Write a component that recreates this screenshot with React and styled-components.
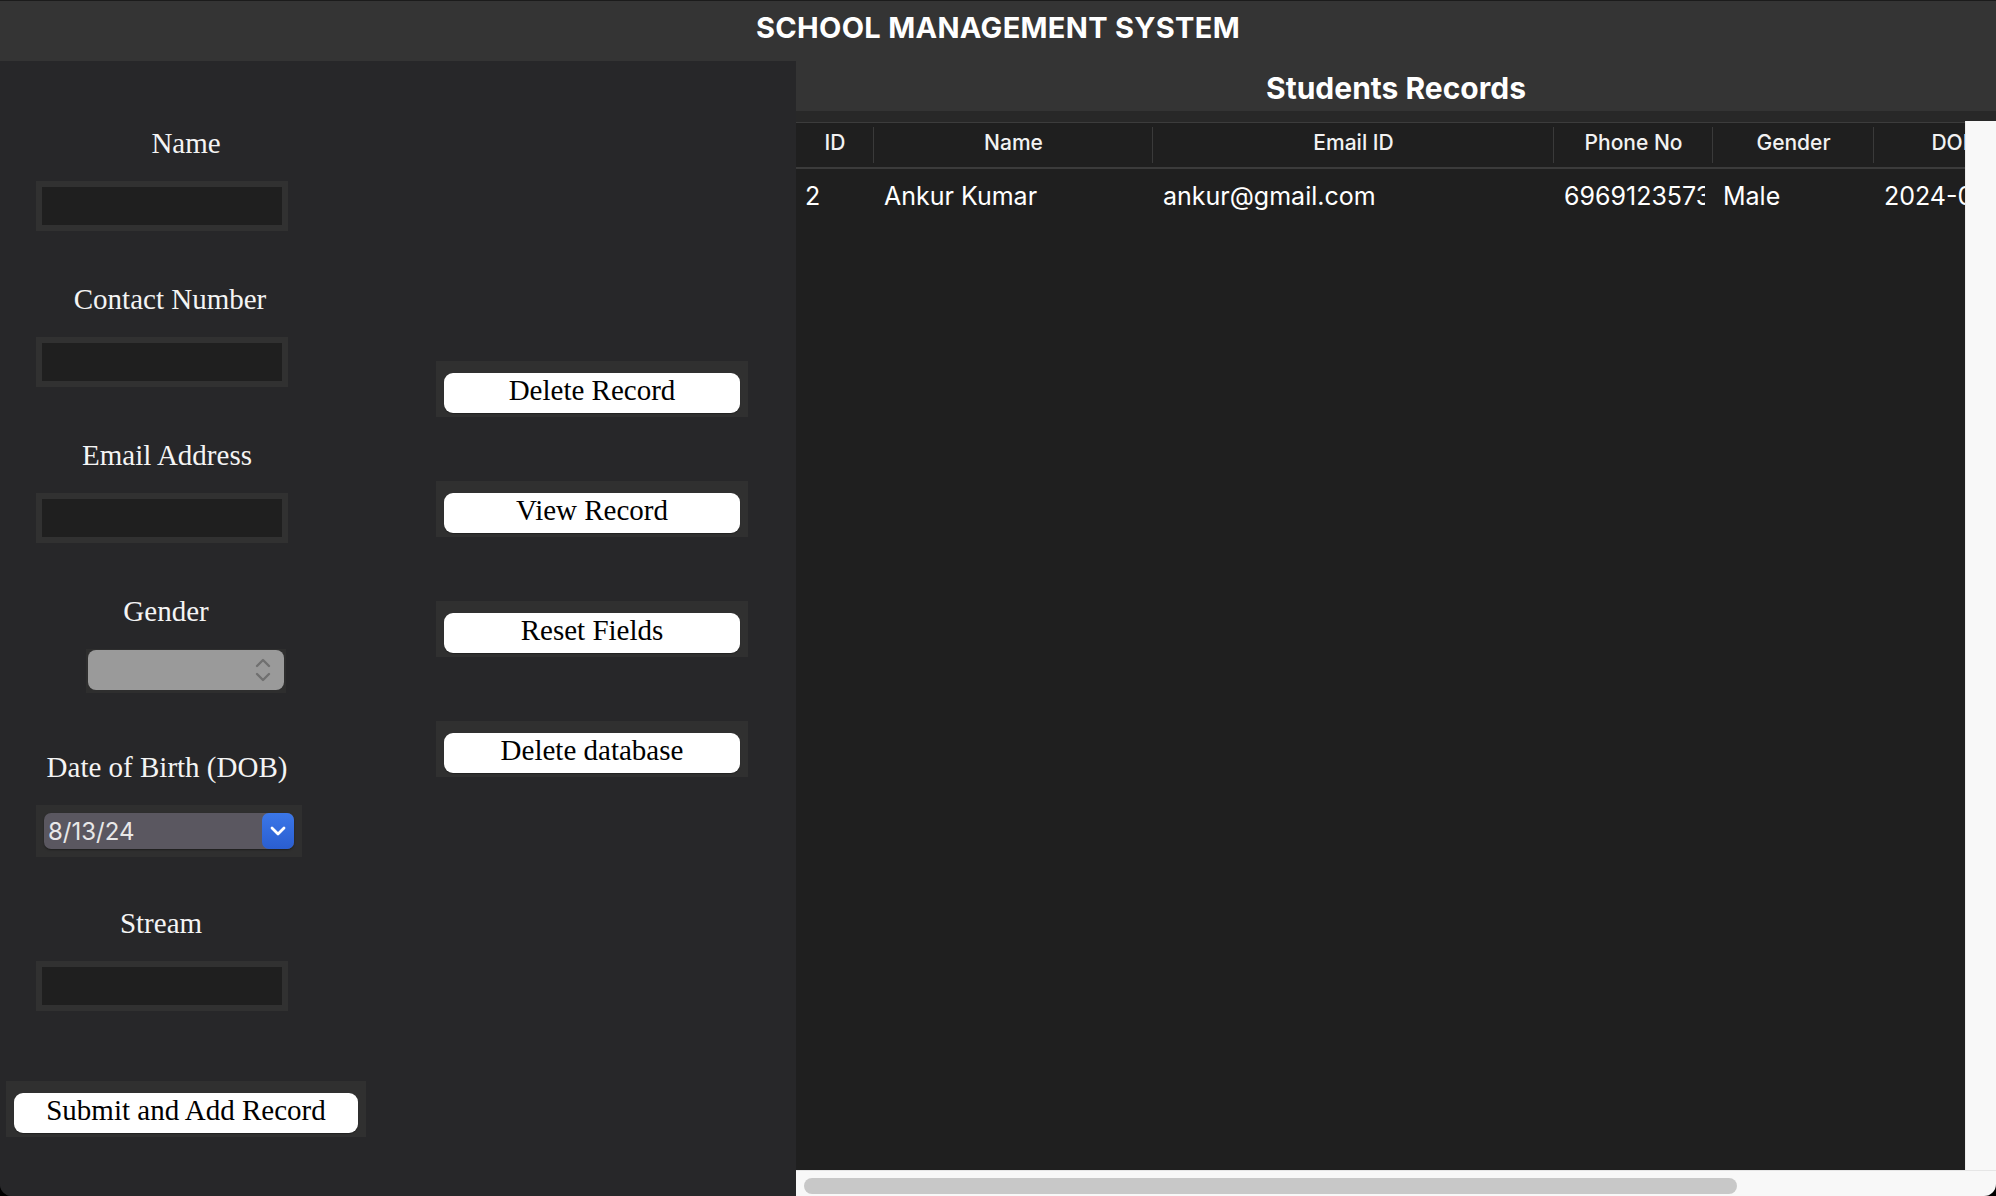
import React from 'react'
import styled, { createGlobalStyle } from 'styled-components'

/* School management window: form on the left, records table on the right */

const SERIF = "'Liberation Serif', 'DejaVu Serif', serif";
const SANS = "Inter, 'Liberation Sans', sans-serif";

const GlobalStyle = createGlobalStyle`
  html, body {
    margin: 0;
    padding: 0;
    background: #000;
  }
  body {
    width: 1996px;
    height: 1196px;
    overflow: hidden;
  }
`

const Window = styled.div`
  width: 1996px;
  height: 1196px;
  box-sizing: border-box;
  display: grid;
  grid-template-columns: 796px 1fr;
  grid-template-rows: 60px 1fr;
  background: #272729;
  border-top: 1px solid #1b1b1b;
  border-radius: 0 0 12px 12px;
  overflow: hidden;
`
const TitleBar = styled.header`
  grid-column: 1 / -1;
  background: #343434;
  display: flex;
  align-items: center;
  justify-content: center;
  padding-bottom: 7px;
  font-family: ${SANS};
  font-weight: 700;
  font-size: 29px;
  letter-spacing: 0.3px;
  color: #fff;
`

/* Left side */
const LeftPanel = styled.section`
  display: grid;
  grid-template-columns: 400px 1fr;
  background: #272729;
`
const FormColumn = styled.div`
  display: flex;
  flex-direction: column;
  align-items: flex-start;
  padding: 63px 0 0 36px;
`
const Field = styled.div`
  height: 156px;
  display: flex;
  flex-direction: column;
  align-items: flex-start;
`
const Label = styled.div`
  width: 252px;
  height: 40px;
  line-height: 38px;
  margin-bottom: 17px;
  text-align: center;
  white-space: nowrap;
  transform: translateX(${p => p.$dx || 0}px);
  font-family: ${SERIF};
  font-size: 29px;
  color: #f4f4f4;
`
const Entry = styled.input`
  width: 252px;
  height: 50px;
  box-sizing: border-box;
  margin: 0;
  padding: 0 6px;
  border: 6px solid #313131;
  background: #1f1f1f;
  color: #fff;
  font-family: ${SANS};
  font-size: 20px;
  outline: none;
`
const SelectFrame = styled.div`
  margin-left: 50px;
  width: 200px;
  height: 44px;
  box-sizing: border-box;
  padding: 1px 2px 3px;
  background: #2e2e2e;
`
const SelectBox = styled.div`
  height: 100%;
  border-radius: 8px;
  background: #9a9a9a;
  display: flex;
  align-items: center;
  justify-content: flex-end;
  padding-right: 13px;
`
const DateFrame = styled.div`
  width: 266px;
  height: 52px;
  box-sizing: border-box;
  padding: 8px;
  background: #2f2f2f;
`
const DateBox = styled.div`
  height: 100%;
  border-radius: 7px;
  background: #5a5760;
  display: flex;
  align-items: center;
  justify-content: space-between;
  box-shadow: 0 1px 2px rgba(0, 0, 0, 0.4);
`
const DateText = styled.span`
  padding-left: 4px;
  font-family: ${SANS};
  font-size: 24px;
  color: #e8e8e8;
`
const DateButton = styled.div`
  width: 32px;
  height: 100%;
  border-radius: 7px;
  background: linear-gradient(#3b77e8, #2a5ed0);
  display: flex;
  align-items: center;
  justify-content: center;
`
const ButtonFrame = styled.div`
  width: ${p => p.$w}px;
  box-sizing: border-box;
  padding: 12px 8px 4px;
  margin-left: ${p => p.$ml || 0}px;
  background: #303030;
`
const WhiteButton = styled.button`
  display: block;
  width: 100%;
  height: 40px;
  box-sizing: border-box;
  margin: 0;
  padding: 0 0 6px;
  border: none;
  border-radius: 9px;
  background: #fff;
  box-shadow: 0 1px 1px rgba(0, 0, 0, 0.35);
  font-family: ${SERIF};
  font-size: 29px;
  line-height: 34px;
  color: #000;
`
const SubmitWrap = styled.div`
  margin-top: 21px;
`
const ActionColumn = styled.div`
  display: flex;
  flex-direction: column;
  gap: 64px;
  padding: 300px 0 0 36px;
`

/* Right side */
const RightPanel = styled.section`
  display: flex;
  flex-direction: column;
  min-width: 0;
  background: #282828;
`
const PanelTitle = styled.h2`
  margin: 0 0 11px;
  height: 50px;
  flex: none;
  background: #343434;
  display: flex;
  align-items: center;
  justify-content: center;
  padding-top: 3px;
  box-sizing: border-box;
  font-family: ${SANS};
  font-weight: 700;
  font-size: 30px;
  color: #fff;
`
const TableArea = styled.div`
  flex: 1;
  display: flex;
  min-height: 0;
`
const Viewport = styled.div`
  flex: 1;
  overflow: hidden;
  background: #1f1f1f;
  border-top: 1px solid #3c3c3c;
`
const VScroll = styled.div`
  width: 30px;
  margin-top: -1px;
  background: #f8f8f8;
  border-left: 1px solid #ececec;
`
const HScroll = styled.div`
  height: 26px;
  flex: none;
  box-sizing: border-box;
  padding: 7px 0 2px 8px;
  background: #f8f8f8;
  border-top: 1px solid #e6e6e6;
`
const Thumb = styled.div`
  width: 933px;
  height: 16px;
  border-radius: 8px;
  background: #c8c8c8;
`
const Table = styled.table`
  table-layout: fixed;
  width: 1238px;
  border-collapse: collapse;
  font-family: ${SANS};
`
const HeadCell = styled.th`
  position: relative;
  height: 38px;
  padding: 0 0 6px;
  border-bottom: 2px solid #3b3b3b;
  font-size: 21px;
  font-weight: 500;
  color: #f2f2f2;
  text-align: center;
  &::after {
    content: '';
    position: absolute;
    right: 0;
    top: 4px;
    bottom: 4px;
    width: 1px;
    background: #3a3a3a;
  }
  &:last-child::after {
    display: none;
  }
`
const Cell = styled.td`
  height: 54px;
  padding: 0 8px 2px ${p => p.$pl ?? 10}px;
  font-size: 25px;
  color: #fff;
`
const CellText = styled.span`
  display: block;
  overflow: hidden;
  white-space: nowrap;
`

const columns = [
  { title: 'ID', width: 78 },
  { title: 'Name', width: 279 },
  { title: 'Email ID', width: 401 },
  { title: 'Phone No', width: 159 },
  { title: 'Gender', width: 161 },
  { title: 'DOB', width: 160 },
];

const rows = [
  ['2', 'Ankur Kumar', 'ankur@gmail.com', '6969123573', 'Male', '2024-08-13'],
];

const fields = [
  { label: 'Name', dx: 24 },
  { label: 'Contact Number', dx: 8 },
  { label: 'Email Address', dx: 5 },
  { label: 'Gender', dx: 4, kind: 'select' },
  { label: 'Date of Birth (DOB)', dx: 5, kind: 'date' },
  { label: 'Stream', dx: -1 },
];

const actions = ['Delete Record', 'View Record', 'Reset Fields', 'Delete database'];

const UpDown = () => (
  <svg width="16" height="26" viewBox="0 0 16 26" fill="none" stroke="#707070" strokeWidth="2.4" strokeLinecap="round" strokeLinejoin="round">
    <path d="M2 9 L8 3 L14 9" />
    <path d="M2 17 L8 23 L14 17" />
  </svg>
);

const ChevronDown = () => (
  <svg width="16" height="10" viewBox="0 0 16 10" fill="none" stroke="#fff" strokeWidth="2.8" strokeLinecap="round" strokeLinejoin="round">
    <path d="M2 2 L8 8 L14 2" />
  </svg>
);

const Control = ({ kind }) => {
  if (kind === 'select') {
    return (
      <SelectFrame>
        <SelectBox><UpDown /></SelectBox>
      </SelectFrame>
    );
  }
  if (kind === 'date') {
    return (
      <DateFrame>
        <DateBox>
          <DateText>8/13/24</DateText>
          <DateButton><ChevronDown /></DateButton>
        </DateBox>
      </DateFrame>
    );
  }
  return <Entry type="text" />;
};

const App = () => (
  <>
    <GlobalStyle />
    <Window>
      <TitleBar>SCHOOL MANAGEMENT SYSTEM</TitleBar>

      <LeftPanel>
        <FormColumn>
          {fields.map(f => (
            <Field key={f.label}>
              <Label $dx={f.dx}>{f.label}</Label>
              <Control kind={f.kind} />
            </Field>
          ))}
          <SubmitWrap>
            <ButtonFrame $w={360} $ml={-30}>
              <WhiteButton>Submit and Add Record</WhiteButton>
            </ButtonFrame>
          </SubmitWrap>
        </FormColumn>
        <ActionColumn>
          {actions.map(a => (
            <ButtonFrame key={a} $w={312}>
              <WhiteButton>{a}</WhiteButton>
            </ButtonFrame>
          ))}
        </ActionColumn>
      </LeftPanel>

      <RightPanel>
        <PanelTitle>Students Records</PanelTitle>
        <TableArea>
          <Viewport>
            <Table>
              <colgroup>
                {columns.map(c => <col key={c.title} style={{ width: c.width }} />)}
              </colgroup>
              <thead>
                <tr>
                  {columns.map(c => <HeadCell key={c.title}>{c.title}</HeadCell>)}
                </tr>
              </thead>
              <tbody>
                {rows.map(r => (
                  <tr key={r[0]}>
                    {r.map((v, i) => (
                      <Cell key={i} $pl={i === 0 ? 9 : 10}>
                        <CellText>{v}</CellText>
                      </Cell>
                    ))}
                  </tr>
                ))}
              </tbody>
            </Table>
          </Viewport>
          <VScroll />
        </TableArea>
        <HScroll><Thumb /></HScroll>
      </RightPanel>
    </Window>
  </>
);

export default App;
